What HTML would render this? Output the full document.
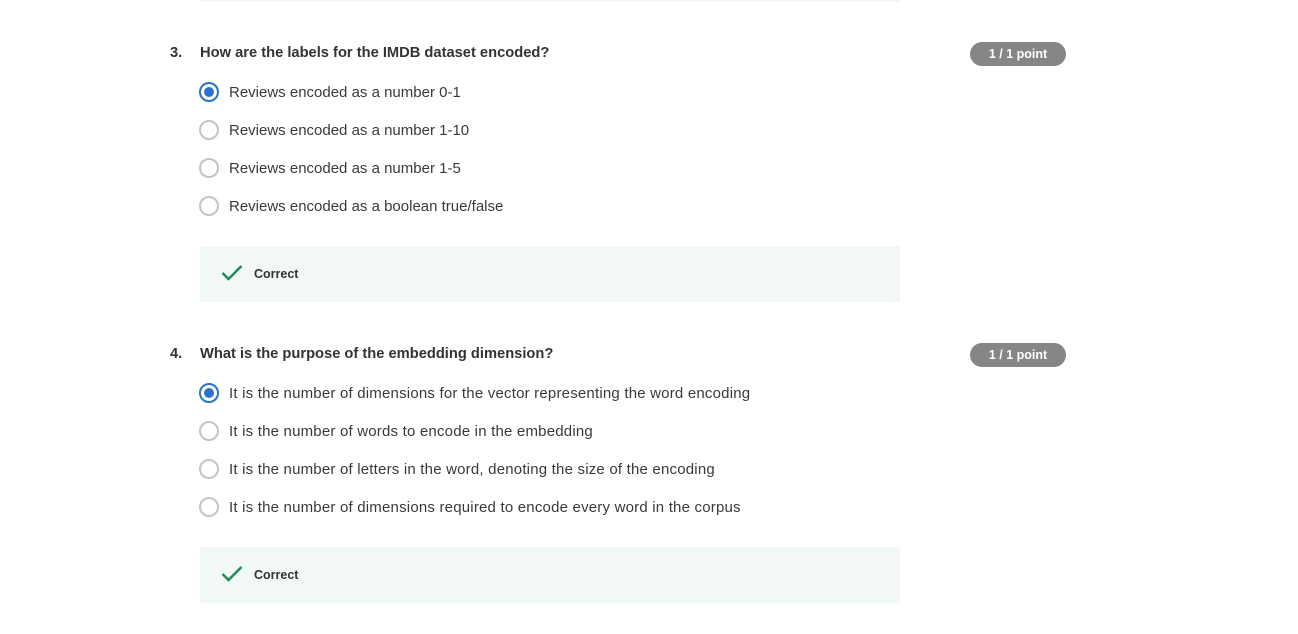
<!DOCTYPE html>
<html><head><meta charset="utf-8"><style>
body{margin:0;width:1298px;height:634px;background:#fff;font-family:"Liberation Sans",sans-serif;color:#1f1f1f;position:relative;overflow:hidden}
.a{position:absolute;white-space:nowrap}
.q{font-weight:bold;font-size:14.7px;color:#333}
.o{font-size:15px;color:#373a3c}
.r{position:absolute;width:16px;height:16px;border:2px solid #c4c4c4;border-radius:50%;box-sizing:content-box;left:199px}
.r.s{border-color:#2a73cc}
.r.s::after{content:"";position:absolute;left:3px;top:3px;width:10px;height:10px;border-radius:50%;background:#2a73cc}
.fb{position:absolute;left:200px;width:700px;height:56px;background:#f2f8f5}
.fb span{position:absolute;left:54px;top:21px;font-size:12.5px;font-weight:bold;color:#333}
.fb svg{position:absolute;left:21px;top:18px}
.b{position:absolute;left:970px;width:96px;height:24px;border-radius:12px;background:#868686;color:#fff;font-size:12.5px;font-weight:bold;text-align:center;line-height:25px}
</style></head><body>
<div class="a" style="left:200px;top:0;width:700px;height:2px;background:#f2f8f5"></div>

<div class="a q" style="left:170px;top:45px">3.</div>
<div class="a q" style="left:200px;top:45px">How are the labels for the IMDB dataset encoded?</div>
<div class="b" style="top:42px">1 / 1 point</div>
<div class="r s" style="top:82px"></div><div class="a o" style="left:229px;top:84px">Reviews encoded as a number 0-1</div>
<div class="r" style="top:120px"></div><div class="a o" style="left:229px;top:122px">Reviews encoded as a number 1-10</div>
<div class="r" style="top:158px"></div><div class="a o" style="left:229px;top:160px">Reviews encoded as a number 1-5</div>
<div class="r" style="top:196px"></div><div class="a o" style="left:229px;top:198px">Reviews encoded as a boolean true/false</div>
<div class="fb" style="top:246px"><svg width="22" height="18" viewBox="0 0 22 18"><path d="M1.5 9 L7.5 15 L20.5 2" fill="none" stroke="#1e8a57" stroke-width="2.4"/></svg><span>Correct</span></div>

<div class="a q" style="left:170px;top:346px">4.</div>
<div class="a q" style="left:200px;top:346px">What is the purpose of the embedding dimension?</div>
<div class="b" style="top:343px">1 / 1 point</div>
<div class="r s" style="top:383px"></div><div class="a o" style="left:229px;top:385px;letter-spacing:0.2px">It is the number of dimensions for the vector representing the word encoding</div>
<div class="r" style="top:421px"></div><div class="a o" style="left:229px;top:423px;letter-spacing:0.2px">It is the number of words to encode in the embedding</div>
<div class="r" style="top:459px"></div><div class="a o" style="left:229px;top:461px;letter-spacing:0.2px">It is the number of letters in the word, denoting the size of the encoding</div>
<div class="r" style="top:497px"></div><div class="a o" style="left:229px;top:499px;letter-spacing:0.2px">It is the number of dimensions required to encode every word in the corpus</div>
<div class="fb" style="top:547px"><svg width="22" height="18" viewBox="0 0 22 18"><path d="M1.5 9 L7.5 15 L20.5 2" fill="none" stroke="#1e8a57" stroke-width="2.4"/></svg><span>Correct</span></div>
</body></html>
